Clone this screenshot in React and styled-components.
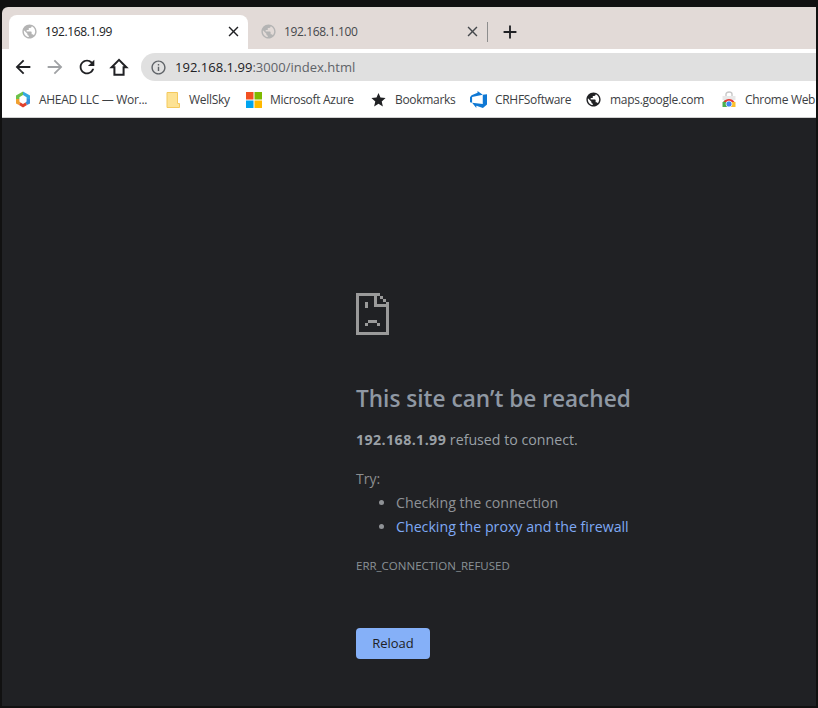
import styled, { createGlobalStyle } from 'styled-components'
import { MdArrowBack, MdArrowForward, MdRefresh, MdInfoOutline, MdClose, MdAdd, MdPublic, MdStar } from 'react-icons/md'

const GlobalStyle = createGlobalStyle`
    html, body {
        margin: 0;
        padding: 0;
        height: 100%;
        background: #111;
    }
    #root {
        height: 100%;
    }
`

function HomeIcon() {
    return (
        <svg width="22" height="22" viewBox="0 0 24 24">
            <path d="M12 4.2 4 12.2H7V20.5H17V12.2H20Z" fill="none" stroke="#202124" strokeWidth="2.2" strokeLinejoin="miter" />
        </svg>
    )
}

function AheadLogo() {
    return (
        <svg width="16" height="17" viewBox="0 0 16 17">
            <path d="M8 .5 V4 L4.4 6.2 V8 H1 V4.4Z" fill="#6cc24a" />
            <path d="M8 .5 L15 4.4 V8 H11.6 V6.2 L8 4Z" fill="#35a9e0" />
            <path d="M15 8 V12.4 L12 14 L10.4 11.6 L11.6 10.6 V8Z" fill="#3b8fd8" />
            <path d="M1 8 H4.4 V10.6 L5.6 11.6 L4 14 L1 12.4Z" fill="#f0a030" />
            <path d="M4 14 L5.6 11.6 L8 13 L10.4 11.6 L12 14 L8 16.5Z" fill="#e0402c" />
        </svg>
    )
}

function FolderIcon() {
    return (
        <svg width="14" height="16" viewBox="0 0 14 16">
            <path d="M1 .5H11.5V11.5H13.5V15.5H1Z" fill="#fde293" stroke="#f4c95d" />
        </svg>
    )
}

function MicrosoftLogo() {
    return (
        <svg width="16" height="16" viewBox="0 0 16 16">
            <rect width="7.5" height="7.5" fill="#f25022" />
            <rect x="8.5" width="7.5" height="7.5" fill="#7fba00" />
            <rect y="8.5" width="7.5" height="7.5" fill="#00a4ef" />
            <rect x="8.5" y="8.5" width="7.5" height="7.5" fill="#ffb900" />
        </svg>
    )
}

function DevOpsLogo() {
    return (
        <svg width="17" height="17" viewBox="0 0 24 24">
            <path d="M0 8.877L2.247 5.91l8.405-3.416V.022l7.37 5.393L2.966 8.338v8.225L0 15.707zm24-4.45v14.651l-5.753 4.9-9.303-3.057v3.056l-5.978-7.416 15.057 1.798V5.415z" fill="#0f78d4" />
        </svg>
    )
}

function WebStoreLogo() {
    return (
        <svg width="16" height="17" viewBox="0 0 16 17">
            <path d="M5 5V3a3 2 0 0 1 6 0V5" fill="none" stroke="#c8c8c8" strokeWidth="1.4" />
            <path d="M1.5 5H14.5V9H1.5Z" fill="#e8e8e8" />
            <path d="M1.5 16V11.5L4 9H8V16Z" fill="#4caf50" />
            <path d="M2.5 11a6.5 6.5 0 0 1 11 0L8 11Z" fill="#e53935" />
            <path d="M8 11H14.5V16H8Z" fill="#fbc02d" />
            <circle cx="8" cy="13" r="3" fill="#4285f4" stroke="#fff" strokeWidth=".7" />
        </svg>
    )
}

function SadFile() {
    return (
        <svg width="33" height="42" viewBox="0 0 33 42" shapeRendering="crispEdges" fill="#9a9a9a">
            <path d="M0 0H24V3H3V39H30V9H33V42H0Z" />
            <path d="M18 0H21V11H33V14H18Z" />
            <path d="M24 3H27V6H24ZM27 6H30V9H27Z" />
            <path d="M9 9H12V15H9ZM9 30H12V33H9ZM12 27H21V30H12ZM21 30H24V33H21Z" />
        </svg>
    )
}

const bookmarks = [
    { icon: <AheadLogo />, label: 'AHEAD LLC — Wor...', w: 109 },
    { icon: <FolderIcon />, label: 'WellSky', w: 40 },
    { icon: <MicrosoftLogo />, label: 'Microsoft Azure', w: 84 },
    { icon: <MdStar size={18} color="#202124" />, label: 'Bookmarks', w: 59 },
    { icon: <DevOpsLogo />, label: 'CRHFSoftware', w: 74 },
    { icon: <MdPublic size={17} color="#202124" />, label: 'maps.google.com', w: 94 },
    { icon: <WebStoreLogo />, label: 'Chrome Web', w: 68 },
]

export default function App() {
    return (
        <Frame>
            <GlobalStyle />
            <TabStrip>
                <Tab $active>
                    <MdPublic size={17} color="#b4b4b4" />
                    <TabTitle>192.168.1.99</TabTitle>
                    <MdClose size={17} color="#202124" />
                </Tab>
                <Tab>
                    <MdPublic size={17} color="#b4b4b4" />
                    <TabTitle>192.168.1.100</TabTitle>
                    <MdClose size={17} color="#45484c" />
                </Tab>
                <TabDivider />
                <NewTab><MdAdd size={22} /></NewTab>
            </TabStrip>

            <Toolbar>
                <NavIcons>
                    <MdArrowBack size={22} color="#202124" />
                    <MdArrowForward size={22} color="#a0a2a5" />
                    <MdRefresh size={22} color="#202124" />
                    <HomeIcon />
                </NavIcons>
                <Omnibox>
                    <MdInfoOutline size={17} color="#5f6368" />
                    <Url>192.168.1.99<UrlPath>:3000/index.html</UrlPath></Url>
                </Omnibox>
            </Toolbar>

            <BookmarkBar>
                {bookmarks.map((b) => (
                    <Bookmark key={b.label}>
                        <BookmarkIcon>{b.icon}</BookmarkIcon>
                        <BookmarkLabel $width={b.w}>{b.label}</BookmarkLabel>
                    </Bookmark>
                ))}
            </BookmarkBar>

            <ErrorPage>
                <SadFile />
                <Heading>This site can’t be reached</Heading>
                <Message><HostName>192.168.1.99</HostName> refused to connect.</Message>
                <TryLabel>Try:</TryLabel>
                <Suggestions>
                    <li>Checking the connection</li>
                    <li><ProxyLink>Checking the proxy and the firewall</ProxyLink></li>
                </Suggestions>
                <ErrorCode>ERR_CONNECTION_REFUSED</ErrorCode>
                <ReloadButton>Reload</ReloadButton>
            </ErrorPage>
        </Frame>
    )
}

const uiFont = `"Open Sans", "Noto Sans", "Liberation Sans", sans-serif`

const Frame = styled.div`
    height: 708px;
    width: 818px;
    box-sizing: border-box;
    padding: 7px 2px 2px 2px;
    background: #111;
    display: flex;
    flex-direction: column;
    overflow: hidden;
    font-family: ${uiFont};
`
const TabStrip = styled.div`
    height: 42px;
    flex: none;
    background: #e2dad7;
    border-radius: 6px 0 0 0;
    display: flex;
    align-items: flex-end;
    padding-left: 7px;
`
const Tab = styled.div`
    width: 239px;
    height: 34px;
    box-sizing: border-box;
    display: flex;
    align-items: center;
    gap: 7px;
    padding: 0 6px 2px 12px;
    border-radius: 8px 8px 0 0;
    background: ${(p) => (p.$active ? '#fff' : 'transparent')};
    color: ${(p) => (p.$active ? '#202124' : '#45484c')};
`
const TabTitle = styled.span`
    flex: 1;
    font-size: 12px;
    letter-spacing: -0.35px;
`
const TabDivider = styled.div`
    width: 1px;
    height: 20px;
    margin: 0 0 7px 0;
    background: #8d8d8d;
`
const NewTab = styled.div`
    display: flex;
    margin: 0 0 6px 11px;
    color: #202124;
`
const Toolbar = styled.div`
    height: 35px;
    flex: none;
    background: #fff;
    display: flex;
    align-items: flex-end;
    padding-bottom: 3px;
    box-sizing: border-box;
`
const NavIcons = styled.div`
    width: 139px;
    flex: none;
    box-sizing: border-box;
    padding-left: 10px;
    display: flex;
    align-items: center;
    gap: 10px;
    height: 28px;
`
const Omnibox = styled.div`
    flex: 1;
    height: 28px;
    background: #e0e0e0;
    border-radius: 14px 0 0 14px;
    display: flex;
    align-items: center;
    gap: 8px;
    padding-left: 9px;
`
const Url = styled.span`
    font-size: 13px;
    letter-spacing: 0.02px;
    color: #202124;
`
const UrlPath = styled.span`
    color: #5f6368;
`
const BookmarkBar = styled.div`
    height: 31px;
    flex: none;
    background: #fff;
    display: flex;
    align-items: center;
    gap: 16px;
    padding: 0 0 2px 12px;
    overflow: hidden;
    white-space: nowrap;
    border-bottom: 1px solid #d0d0d0;
`
const Bookmark = styled.div`
    display: flex;
    align-items: center;
    gap: 8px;
    flex: none;
`
const BookmarkIcon = styled.span`
    width: 17px;
    display: flex;
    justify-content: center;
`
const BookmarkLabel = styled.span`
    font-size: 12px;
    letter-spacing: -0.3px;
    color: #3c4043;
    width: ${(p) => p.$width}px;
`
const ErrorPage = styled.main`
    flex: 1;
    background: #202124;
    padding: 175px 0 0 354px;
    display: flex;
    flex-direction: column;
    align-items: flex-start;
    color: #9aa0a6;
    font-size: 15px;
`
const Heading = styled.h1`
    margin: 49px 0 0;
    font-size: 22.6px;
    line-height: 30px;
    font-weight: 600;
    color: #8f98a3;
`
const Message = styled.p`
    margin: 16px 0 0;
    font-size: 14.2px;
    line-height: 20px;
    color: #9aa0a6;
`
const HostName = styled.strong`
    letter-spacing: 0.42px;
`
const TryLabel = styled.p`
    margin: 19px 0 0;
    font-size: 14px;
    line-height: 20px;
    color: #8d8f90;
`
const Suggestions = styled.ul`
    margin: 2px 0 0;
    padding-left: 40px;
    font-size: 14.2px;
    line-height: 24px;
    color: #8f9296;
`
const ProxyLink = styled.a`
    color: #7fa9f5;
`
const ErrorCode = styled.div`
    margin-top: 19px;
    font-size: 11.5px;
    line-height: 16px;
    color: #8a9296;
`
const ReloadButton = styled.button`
    margin-top: 54px;
    width: 74px;
    height: 31px;
    padding: 0 0 2px;
    border: none;
    border-radius: 4px;
    background: #85b0f8;
    color: #202124;
    font-family: ${uiFont};
    font-size: 13px;
`
